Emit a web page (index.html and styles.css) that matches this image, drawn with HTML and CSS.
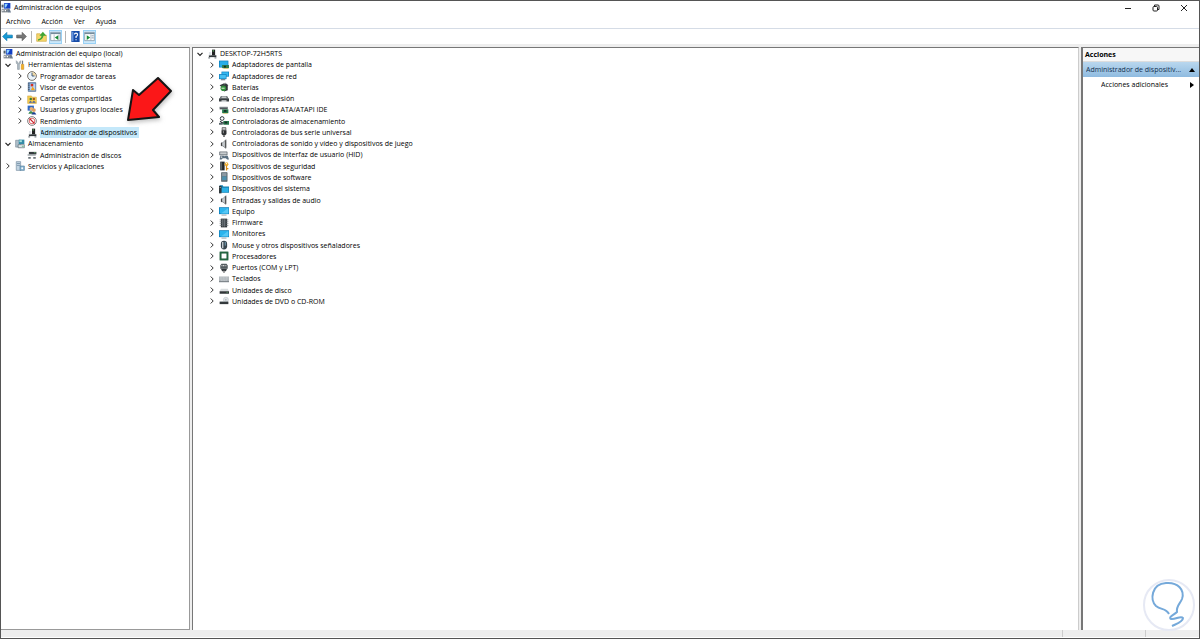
FILE: index.html
```
<!DOCTYPE html>
<html lang="es">
<head>
  <meta charset="UTF-8">
  <meta name="viewport" content="width=device-width, initial-scale=1.0">
  <title>Administración de equipos</title>
  <link rel="stylesheet" href="styles.css">
</head>
<body>
  <!-- Icon set -->
  <svg class="sprite" aria-hidden="true">
    <symbol id="i-right" viewBox="0 0 8 8"><path d="M2.7 1.5L5.2 4L2.7 6.5" fill="none" stroke="#333" stroke-width="1"/></symbol>
    <symbol id="i-down" viewBox="0 0 8 8"><path d="M1.5 2.8L4 5.3L6.5 2.8" fill="none" stroke="#222" stroke-width="1.2"/></symbol>
    <symbol id="i-console" viewBox="0 0 16 16"><path d="M1 1h6v8H1z" fill="#c9d3dc"/><path d="M5 0h10v9H5z" fill="#123fc4"/><path d="M6 1h5l-3 6H6z" fill="#8fd4ff"/><path d="M1 10h10v5H1z" fill="#79828a"/><path d="M2 11h2v2H2zM6 11h2v2H6z" fill="#fff"/><path d="M10 8l4 2 2 5h-5z" fill="#6d7c8f"/><path d="M1 3h3v4H1z" fill="#52606c"/></symbol>
    <symbol id="i-tools" viewBox="0 0 16 16"><path d="M2 1v4l2 2v8h3V7l2-2V1L7 3v2H4V3z" fill="#aebac3" stroke="#75818a" stroke-width=".7"/><path d="M11 1h2v6h-2z" fill="#737d84"/><path d="M10 7h4v8h-4z" fill="#f5b326" stroke="#b87911" stroke-width=".7"/></symbol>
    <symbol id="i-clock" viewBox="0 0 16 16"><circle cx="8" cy="8" r="7" fill="#eaf3fa" stroke="#665f55" stroke-width="1.4"/><path d="M8 8V2a6 6 0 0 1 6 6z" fill="#f2cf83" opacity=".7"/><path d="M8 3v5h4" fill="none" stroke="#2b4c78" stroke-width="1.4"/></symbol>
    <symbol id="i-events" viewBox="0 0 16 16"><path d="M2 1h12v14H2z" fill="#7fa9d8" stroke="#425e82"/><path d="M5 3h8v10H5z" fill="#b8d3f2"/><path d="M6 3h4v4H6z" fill="#d33224"/><path d="M9 7l4 6H6z" fill="#f5a51d"/><path d="M2 3h2M2 6h2M2 9h2M2 12h2" stroke="#222"/></symbol>
    <symbol id="i-shared" viewBox="0 0 16 16"><path d="M1 3h6l1 2h7v10H1z" fill="#f5cd51" stroke="#c79522" stroke-width=".7"/><circle cx="6" cy="8" r="2" fill="#3a7d3d"/><circle cx="11" cy="8" r="2" fill="#a15920"/><path d="M3 14q3-6 5 0zM8 14q3-6 6 0z" fill="#425ea8"/></symbol>
    <symbol id="i-users" viewBox="0 0 16 16"><path d="M1 1h10v8H1z" fill="#2f68c6"/><circle cx="7" cy="6" r="3" fill="#e6b27c"/><path d="M2 14q4-9 9 0z" fill="#3b8a50"/><circle cx="11" cy="8" r="3" fill="#e0a060"/><path d="M7 15q4-8 8 0z" fill="#183c8e"/></symbol>
    <symbol id="i-perf" viewBox="0 0 16 16"><circle cx="8" cy="8" r="7" fill="#fff" stroke="#79777a" stroke-width="1.5"/><circle cx="8" cy="8" r="4.5" fill="none" stroke="#d33d3d" stroke-width="1.2"/><path d="M4 4l8 8" stroke="#c9232c" stroke-width="1.8"/></symbol>
    <symbol id="i-device" viewBox="0 0 16 16"><path d="M8 1h5v9H8z" fill="#222"/><path d="M9 2h2v2H9z" fill="#62b86a"/><path d="M3 10h12v3H3z" fill="#33383b"/><path d="M2 13h3v2H2zM12 13h3v2h-3z" fill="#80888d"/><path d="M3 5h4v5H3z" fill="#dce1e5"/></symbol>
    <symbol id="i-storage" viewBox="0 0 16 16"><path d="M1 2h8v11H1z" fill="#aebfca" stroke="#617480" stroke-width=".8"/><path d="M6 1h9v7H6z" fill="#348ba7"/><path d="M7 2h4v3H7z" fill="#a6e1dc"/><path d="M5 9h10v5H5z" fill="#dce5e9" stroke="#56666f"/><path d="M11 11h3v1h-3z" fill="#30a64b"/></symbol>
    <symbol id="i-disks" viewBox="0 0 16 16"><path d="M3 3h12v4H3z" fill="#343a3d"/><path d="M1 7h13v2H1z" fill="#8b9499"/><path d="M2 11h4v3H2zM10 11h4v3h-4z" fill="#6d767b"/><path d="M11 4h3v1h-3z" fill="#78cc82"/></symbol>
    <symbol id="i-services" viewBox="0 0 16 16"><path d="M2 1h7v14H2z" fill="#c2d4e2" stroke="#71879a"/><path d="M3 4h5M3 7h5" stroke="#5a7991"/><path d="M8 8h7v7H8z" fill="#87b4d1" stroke="#557f9b"/><circle cx="11.5" cy="11.5" r="1.5" fill="#fff"/></symbol>
    <symbol id="i-display" viewBox="0 0 16 16"><path d="M0 1h15v11H0z" fill="#0878b9"/><path d="M1 2h13v9H1z" fill="#27aee8"/><path d="M5 8h11v5H5z" fill="#2b7a4c"/><path d="M8 9h3v3H8z" fill="#172d25"/><path d="M7 13h8v1H7z" fill="#d6b43d"/></symbol>
    <symbol id="i-network" viewBox="0 0 16 16"><path d="M4 1h12v8H4z" fill="#0878b9"/><path d="M5 2h10v6H5z" fill="#35b8f1"/><path d="M0 5h12v8H0z" fill="#0878b9"/><path d="M1 6h10v6H1z" fill="#45bff2"/><path d="M3 14h7" stroke="#54636c" stroke-width="1.5"/></symbol>
    <symbol id="i-battery" viewBox="0 0 16 16"><path d="M1 5l9-4 5 4-9 5z" fill="#353b3e"/><path d="M6 7l8-2v8l-6 2z" fill="#2b3033"/><circle cx="7" cy="10" r="4.5" fill="#338c3d"/><path d="M4 9h5v2H4z" fill="#bfe4b9"/><path d="M8 3l3-1" stroke="#ddd"/></symbol>
    <symbol id="i-printer" viewBox="0 0 16 16"><path d="M3 3h10l2 4H1z" fill="#5c6366"/><path d="M4 4h8v2H4z" fill="#e4e7e9"/><path d="M0 7h16v5H0z" fill="#393f42"/><path d="M4 10h8v3H4z" fill="#d4d8da"/></symbol>
    <symbol id="i-ata" viewBox="0 0 16 16"><path d="M1 3h13v4H1z" fill="#50585c"/><path d="M1 3h13v1H1z" fill="#a4abb0"/><path d="M5 7h10v6H5z" fill="#22764a"/><path d="M8 8h4v3H8z" fill="#173127"/><path d="M6 13h8v1H6z" fill="#d2bd5c"/></symbol>
    <symbol id="i-controller" viewBox="0 0 16 16"><circle cx="5" cy="4" r="3" fill="none" stroke="#30383c" stroke-width="1.6"/><path d="M2 8q2 4 6 3" fill="none" stroke="#30383c" stroke-width="2"/><path d="M7 8h9v6H7z" fill="#28774c"/><path d="M9 9h4v3H9z" fill="#172d24"/><path d="M0 11h6v3H0z" fill="#59666b"/></symbol>
    <symbol id="i-usb" viewBox="0 0 16 16"><path d="M5 1h6v4H5z" fill="#ccc" stroke="#333"/><path d="M4 5h8v6l-2 2H6l-2-2z" fill="#2e3133"/><path d="M8 13v3" stroke="#333" stroke-width="2"/><path d="M7 6v4" stroke="#ccc"/></symbol>
    <symbol id="i-sound" viewBox="0 0 16 16"><path d="M4 6h2l5-5v14l-5-4H4z" fill="#c4c9cc" stroke="#6c7378"/><path d="M10.5 2v12" stroke="#555" stroke-width="2"/><path d="M4 6v5" stroke="#444" stroke-width="2"/></symbol>
    <symbol id="i-hid" viewBox="0 0 16 16"><path d="M1 3h12v5H1z" fill="#a6adb1" stroke="#596166"/><path d="M2 5h10" stroke="#fff"/><path d="M1 15l1-6h5l2 1 2-1h3l2 6h-3l-2-2H6l-2 2z" fill="#596f80"/><path d="M4 10v3M2.5 11.5h3" stroke="#ddd"/></symbol>
    <symbol id="i-security" viewBox="0 0 16 16"><path d="M2 1h7v14H2z" fill="#22282b"/><path d="M3 2h2v12H3z" fill="#5b656a"/><circle cx="12" cy="5" r="3" fill="#efb033"/><path d="M11 7h2v8h-2zM13 11h2v2h-2z" fill="#d78b15"/><circle cx="12" cy="4" r="1" fill="#fff"/></symbol>
    <symbol id="i-software" viewBox="0 0 16 16"><path d="M4 1h9v14H4z" fill="#69767e" stroke="#435159"/><path d="M5 3h7M5 5h7" stroke="#c4d1d8"/><path d="M5 7h7v6H5z" fill="#4f91ad"/></symbol>
    <symbol id="i-system" viewBox="0 0 16 16"><path d="M1 2h5l1 2h9v10H1z" fill="#1581b2"/><path d="M4 6h11v7H4z" fill="#2db1e5"/><path d="M0 3h4v12H0z" fill="#30383c"/><path d="M1 5h2v1H1z" fill="#eee"/></symbol>
    <symbol id="i-monitor" viewBox="0 0 16 16"><path d="M0 2h16v11H0z" fill="#0874b1"/><path d="M1 3h14v9H1z" fill="#2cb4ed"/><path d="M15 3v9H3z" fill="#57c8f5"/><path d="M4 14h8v1H4z" fill="#65747c"/></symbol>
    <symbol id="i-firmware" viewBox="0 0 16 16"><path d="M3 1h10v14H3z" fill="#30363a"/><path d="M1 3h14M1 6h14M1 9h14M1 12h14" stroke="#697278"/><path d="M5 3h6v10H5z" fill="#454d51"/><path d="M6 2v12M9 2v12" stroke="#899196"/></symbol>
    <symbol id="i-mouse" viewBox="0 0 16 16"><rect x="3" y="1" width="10" height="14" rx="5" fill="#38454d"/><path d="M6 3v10" stroke="#d5dde2" stroke-width="2"/><path d="M10 3v6" stroke="#7ba6be" stroke-width="1.5"/></symbol>
    <symbol id="i-cpu" viewBox="0 0 16 16"><path d="M1 1h14v14H1z" fill="#195735"/><path d="M4 4h8v8H4z" fill="#fff"/><path d="M2 2h12v12H2z" fill="none" stroke="#388557" stroke-width=".7"/></symbol>
    <symbol id="i-port" viewBox="0 0 16 16"><path d="M4 1h8l2 3v5H2V4z" fill="#535b5f"/><path d="M4 4h8" stroke="#ddd" stroke-width="2" stroke-dasharray="1.5 1"/><path d="M3 9h10l-2 4H5z" fill="#30363a"/><path d="M8 12v4" stroke="#777" stroke-width="2"/></symbol>
    <symbol id="i-keyboard" viewBox="0 0 16 16"><path d="M0 4h16v9H0z" fill="#aeb4b8"/><path d="M0 12h16v1H0z" fill="#535a60"/><path d="M1 6h14M1 8h14M3 10h10" stroke="#d2d8dc" stroke-dasharray="2 .5"/></symbol>
    <symbol id="i-drive" viewBox="0 0 16 16"><path d="M3 6h11l2 4H1z" fill="#d9dddf"/><path d="M1 10h15v4H1z" fill="#303538"/><path d="M12 11h2v1h-2z" fill="#61d16d"/></symbol>
    <symbol id="i-dvd" viewBox="0 0 16 16"><circle cx="11" cy="6" r="4" fill="#dfe5e9" stroke="#c0c6ca"/><circle cx="11" cy="6" r="1" fill="#888"/><path d="M1 9h14v4H1z" fill="#33393c"/><path d="M2 8h10v1H2z" fill="#a3aaae"/></symbol>
  </svg>

  <div class="window">
    <header class="titlebar">
      <svg class="icon"><use href="#i-console"/></svg>
      <h1>Administración de equipos</h1>
      <div class="window-buttons">
        <button aria-label="Minimizar"><svg viewBox="0 0 8 8"><path d="M1 4.5h6"/></svg></button>
        <button aria-label="Restaurar"><svg viewBox="0 0 8 8"><rect x="1" y="2.5" width="4.5" height="4.5" rx="1"/><path d="M2.5 2.5V1H6q1 0 1 1v3.5H5.5"/></svg></button>
        <button aria-label="Cerrar"><svg viewBox="0 0 8 8"><path d="M1 1l6 6M7 1L1 7"/></svg></button>
      </div>
    </header>

    <nav class="menubar">
      <button>Archivo</button>
      <button>Acción</button>
      <button>Ver</button>
      <button>Ayuda</button>
    </nav>

    <div class="toolbar">
      <button aria-label="Atrás"><svg viewBox="0 0 16 16"><path d="M1 8l6-6v4h8v4H7v4z" fill="#159bd7" stroke="#0872a8"/></svg></button>
      <button aria-label="Adelante"><svg viewBox="0 0 16 16"><path d="M15 8L9 2v4H1v4h8v4z" fill="#777" stroke="#555"/></svg></button>
      <span class="divider"></span>
      <button aria-label="Subir un nivel"><svg viewBox="0 0 16 16"><path d="M1 4h5l1 2h8v9H1z" fill="#f4d66b" stroke="#d0ac45"/><path d="M3 12q5-1 5-5H5l5-6 5 6h-4q-1 6-8 7z" fill="#3fa535"/></svg></button>
      <button class="pressed" aria-label="Mostrar árbol"><svg viewBox="0 0 16 16"><path d="M1 2h14v12H1z" fill="#fff" stroke="#748b9b"/><path d="M1 3.5h14" stroke="#748b9b" stroke-width="2"/><path d="M6 5v9M13 5v9" stroke="#9aabb6"/><path d="M12 6v7L7 9.500z" fill="#168b34"/></svg></button>
      <span class="divider"></span>
      <button aria-label="Ayuda"><svg viewBox="0 0 16 16"><path d="M2 0h12v16H2z" fill="#174ca8"/><path d="M3 1h2v14H3z" fill="#6d9be3"/><path d="M6.500 5q0-2 2.200-2 2.300 0 2.300 2T8.800 8v2M8.800 12v1.500" fill="none" stroke="#fff" stroke-width="1.700"/></svg></button>
      <button class="pressed" aria-label="Panel de acciones"><svg viewBox="0 0 16 16"><path d="M1 2h14v12H1z" fill="#fff" stroke="#748b9b"/><path d="M1 3.5h14" stroke="#748b9b" stroke-width="2"/><path d="M10 5v9" stroke="#9aabb6"/><path d="M4 6v7l5-3.500z" fill="#168b34"/><path d="M11 7h3M11 10h3" stroke="#58718a"/></svg></button>
    </div>

    <main class="panes">
      <section class="pane console">
        <ul class="tree">
          <li class="root"><svg class="icon"><use href="#i-console"/></svg><span>Administración del equipo (local)</span></li>
          <li><button aria-label="Contraer"><svg><use href="#i-down"/></svg></button><svg class="icon"><use href="#i-tools"/></svg><span>Herramientas del sistema</span></li>
          <li class="child"><button aria-label="Expandir"><svg><use href="#i-right"/></svg></button><svg class="icon"><use href="#i-clock"/></svg><span>Programador de tareas</span></li>
          <li class="child"><button aria-label="Expandir"><svg><use href="#i-right"/></svg></button><svg class="icon"><use href="#i-events"/></svg><span>Visor de eventos</span></li>
          <li class="child"><button aria-label="Expandir"><svg><use href="#i-right"/></svg></button><svg class="icon"><use href="#i-shared"/></svg><span>Carpetas compartidas</span></li>
          <li class="child"><button aria-label="Expandir"><svg><use href="#i-right"/></svg></button><svg class="icon"><use href="#i-users"/></svg><span>Usuarios y grupos locales</span></li>
          <li class="child"><button aria-label="Expandir"><svg><use href="#i-right"/></svg></button><svg class="icon"><use href="#i-perf"/></svg><span>Rendimiento</span></li>
          <li class="child leaf"><svg class="icon"><use href="#i-device"/></svg><span class="selected">Administrador de dispositivos</span></li>
          <li><button aria-label="Contraer"><svg><use href="#i-down"/></svg></button><svg class="icon"><use href="#i-storage"/></svg><span>Almacenamiento</span></li>
          <li class="child leaf"><svg class="icon"><use href="#i-disks"/></svg><span>Administración de discos</span></li>
          <li><button aria-label="Expandir"><svg><use href="#i-right"/></svg></button><svg class="icon"><use href="#i-services"/></svg><span>Servicios y Aplicaciones</span></li>
        </ul>
      </section>

      <section class="pane devices">
        <ul class="tree">
          <li><button aria-label="Contraer"><svg><use href="#i-down"/></svg></button><svg class="icon"><use href="#i-device"/></svg><span>DESKTOP-72H5RTS</span></li>
          <li class="child"><button aria-label="Expandir"><svg><use href="#i-right"/></svg></button><svg class="icon"><use href="#i-display"/></svg><span>Adaptadores de pantalla</span></li>
          <li class="child"><button aria-label="Expandir"><svg><use href="#i-right"/></svg></button><svg class="icon"><use href="#i-network"/></svg><span>Adaptadores de red</span></li>
          <li class="child"><button aria-label="Expandir"><svg><use href="#i-right"/></svg></button><svg class="icon"><use href="#i-battery"/></svg><span>Baterías</span></li>
          <li class="child"><button aria-label="Expandir"><svg><use href="#i-right"/></svg></button><svg class="icon"><use href="#i-printer"/></svg><span>Colas de impresión</span></li>
          <li class="child"><button aria-label="Expandir"><svg><use href="#i-right"/></svg></button><svg class="icon"><use href="#i-ata"/></svg><span>Controladoras ATA/ATAPI IDE</span></li>
          <li class="child"><button aria-label="Expandir"><svg><use href="#i-right"/></svg></button><svg class="icon"><use href="#i-controller"/></svg><span>Controladoras de almacenamiento</span></li>
          <li class="child"><button aria-label="Expandir"><svg><use href="#i-right"/></svg></button><svg class="icon"><use href="#i-usb"/></svg><span>Controladoras de bus serie universal</span></li>
          <li class="child"><button aria-label="Expandir"><svg><use href="#i-right"/></svg></button><svg class="icon"><use href="#i-sound"/></svg><span>Controladoras de sonido y vídeo y dispositivos de juego</span></li>
          <li class="child"><button aria-label="Expandir"><svg><use href="#i-right"/></svg></button><svg class="icon"><use href="#i-hid"/></svg><span>Dispositivos de interfaz de usuario (HID)</span></li>
          <li class="child"><button aria-label="Expandir"><svg><use href="#i-right"/></svg></button><svg class="icon"><use href="#i-security"/></svg><span>Dispositivos de seguridad</span></li>
          <li class="child"><button aria-label="Expandir"><svg><use href="#i-right"/></svg></button><svg class="icon"><use href="#i-software"/></svg><span>Dispositivos de software</span></li>
          <li class="child"><button aria-label="Expandir"><svg><use href="#i-right"/></svg></button><svg class="icon"><use href="#i-system"/></svg><span>Dispositivos del sistema</span></li>
          <li class="child"><button aria-label="Expandir"><svg><use href="#i-right"/></svg></button><svg class="icon"><use href="#i-sound"/></svg><span>Entradas y salidas de audio</span></li>
          <li class="child"><button aria-label="Expandir"><svg><use href="#i-right"/></svg></button><svg class="icon"><use href="#i-monitor"/></svg><span>Equipo</span></li>
          <li class="child"><button aria-label="Expandir"><svg><use href="#i-right"/></svg></button><svg class="icon"><use href="#i-firmware"/></svg><span>Firmware</span></li>
          <li class="child"><button aria-label="Expandir"><svg><use href="#i-right"/></svg></button><svg class="icon"><use href="#i-monitor"/></svg><span>Monitores</span></li>
          <li class="child"><button aria-label="Expandir"><svg><use href="#i-right"/></svg></button><svg class="icon"><use href="#i-mouse"/></svg><span>Mouse y otros dispositivos señaladores</span></li>
          <li class="child"><button aria-label="Expandir"><svg><use href="#i-right"/></svg></button><svg class="icon"><use href="#i-cpu"/></svg><span>Procesadores</span></li>
          <li class="child"><button aria-label="Expandir"><svg><use href="#i-right"/></svg></button><svg class="icon"><use href="#i-port"/></svg><span>Puertos (COM y LPT)</span></li>
          <li class="child"><button aria-label="Expandir"><svg><use href="#i-right"/></svg></button><svg class="icon"><use href="#i-keyboard"/></svg><span>Teclados</span></li>
          <li class="child"><button aria-label="Expandir"><svg><use href="#i-right"/></svg></button><svg class="icon"><use href="#i-drive"/></svg><span>Unidades de disco</span></li>
          <li class="child"><button aria-label="Expandir"><svg><use href="#i-right"/></svg></button><svg class="icon"><use href="#i-dvd"/></svg><span>Unidades de DVD o CD-ROM</span></li>
        </ul>
      </section>

      <aside class="pane actions">
        <h2>Acciones</h2>
        <button class="group"><span>Administrador de dispositiv...</span><svg viewBox="0 0 8 8"><path d="M1 6l3-4 3 4z"/></svg></button>
        <button class="more"><span>Acciones adicionales</span><svg viewBox="0 0 8 8"><path d="M2 1l4 3-4 3z"/></svg></button>
      </aside>
    </main>

    <footer class="statusbar"><span></span><span></span><span></span></footer>
  </div>

  <!-- Pointer to the selected tree item -->
  <svg class="arrow" viewBox="0 0 56 56" aria-hidden="true"><path d="M8 48L13 18L19 23L38 6L51 19L33 38L39 45Z"/></svg>

  <!-- Bulb watermark -->
  <svg class="bulb" viewBox="0 0 52 52" aria-hidden="true"><circle cx="26" cy="26" r="25"/><path d="M26 35C23 29 18 31 13 27C7 21 8 5 23 4C35 3 42 11 39 20C37 25 33 27 34 33C31 36 25 38 28 40C32 41 38 36 40 39C40 43 33 45 29 47"/></svg>
</body>
</html>
```
FILE: styles.css
```
* {
  box-sizing: border-box;
}

body {
  margin: 0;
  font-family: "Open Sans", "Noto Sans", sans-serif;
  font-size: 7px;
  line-height: 11px;
  color: #000;
  overflow: hidden;
}

button {
  border: none;
  background: none;
  padding: 0;
  font: inherit;
  color: inherit;
}

svg {
  display: block;
  flex: none;
}

ul, h1, h2 {
  margin: 0;
  padding: 0;
  font-size: 7px;
  font-weight: normal;
  list-style: none;
}

.sprite {
  position: absolute;
  width: 0;
  height: 0;
}

.icon {
  width: 10px;
  height: 10px;
}

.window {
  display: flex;
  flex-direction: column;
  height: 100vh;
  border: 1px solid #555;
  background: #fff;
}

/* Title and menu */
.titlebar {
  display: flex;
  align-items: center;
  gap: 3px;
  height: 13px;
}

.window-buttons {
  display: flex;
  gap: 20px;
  margin-left: auto;
  padding-right: 11px;
}

.window-buttons svg {
  width: 8px;
  height: 8px;
  fill: none;
  stroke: #222;
}

.menubar {
  display: flex;
  gap: 11px;
  height: 14px;
  padding: 0 5px;
}

/* Toolbar */
.toolbar {
  display: flex;
  align-items: center;
  gap: 1px;
  height: 16px;
  border-top: 1px solid #d5dce6;
}

.toolbar button {
  display: grid;
  place-items: center;
  width: 13px;
  height: 14px;
}

.toolbar svg {
  width: 11px;
  height: 11px;
}

.toolbar .pressed {
  background: #cbe8fb;
  border: 1px solid #99d1f5;
}

.divider {
  width: 1px;
  height: 12px;
  margin: 0 2px;
  background: #b5b5b5;
}

/* Panes */
.panes {
  flex: 1;
  display: grid;
  grid-template-columns: 189px 1fr 118px;
  gap: 2px;
  min-height: 0;
  padding-top: 3px;
  background: #eee;
}

.pane {
  min-width: 0;
  background: #fff;
  border-top: 1px solid #777;
}

.console {
  border-right: 1px solid #999;
  border-bottom: 1px solid #999;
}

.devices {
  border-left: 1px solid #777;
  border-right: 1px solid #ccc;
}

.tree {
  display: grid;
  grid-auto-rows: 1fr;
}

.console .tree {
  min-height: 124px;
}

.devices .tree {
  min-height: 259px;
}

.tree li {
  display: flex;
  align-items: center;
  gap: 3px;
  padding-left: 3px;
  white-space: nowrap;
}

.tree .root {
  padding-left: 2px;
}

.tree .child {
  padding-left: 15px;
}

.tree .leaf {
  padding-left: 26px;
}

.tree button svg {
  width: 8px;
  height: 8px;
}

.tree .selected {
  background: #c4e8fa;
  outline: 1px solid #c4e8fa;
  outline-offset: -1px;
  padding-right: 2px;
}

/* Actions */
.actions {
  border-left: 2px solid #777;
}

.actions h2 {
  padding: 1px 2px;
  border-bottom: 1px solid #ddd;
  background: #f7f7f7;
  font-weight: bold;
}

.actions button {
  display: flex;
  align-items: center;
  gap: 3px;
  width: 100%;
  height: 15px;
  padding: 0 3px;
  text-align: left;
}

.actions button span {
  flex: 1;
  overflow: hidden;
  text-overflow: ellipsis;
  white-space: nowrap;
}

.actions button svg {
  width: 8px;
  height: 8px;
}

.actions .group {
  background: linear-gradient(#b9d7ee, #8fbbe0);
  color: #14304f;
}

.actions .more {
  padding-left: 18px;
}

/* Status bar */
.statusbar {
  display: grid;
  grid-template-columns: 1fr 83px 54px;
  height: 8px;
  background: #eee;
  border-bottom: 1px solid #fff;
}

.statusbar span + span {
  border-left: 1px solid #ccc;
}

/* Overlays */
.arrow {
  position: absolute;
  left: 120px;
  top: 72px;
  width: 56px;
  height: 56px;
  fill: #fb1718;
  stroke: #151515;
  stroke-width: 2;
  stroke-linejoin: round;
  filter: drop-shadow(1px 2px 2px #8888);
}

.bulb {
  position: absolute;
  right: 5px;
  bottom: 8px;
  width: 52px;
  height: 52px;
  fill: none;
  stroke: #75a9da;
  stroke-width: 2;
}

.bulb circle {
  fill: #fff;
  stroke: #e6e9f4;
}
```
